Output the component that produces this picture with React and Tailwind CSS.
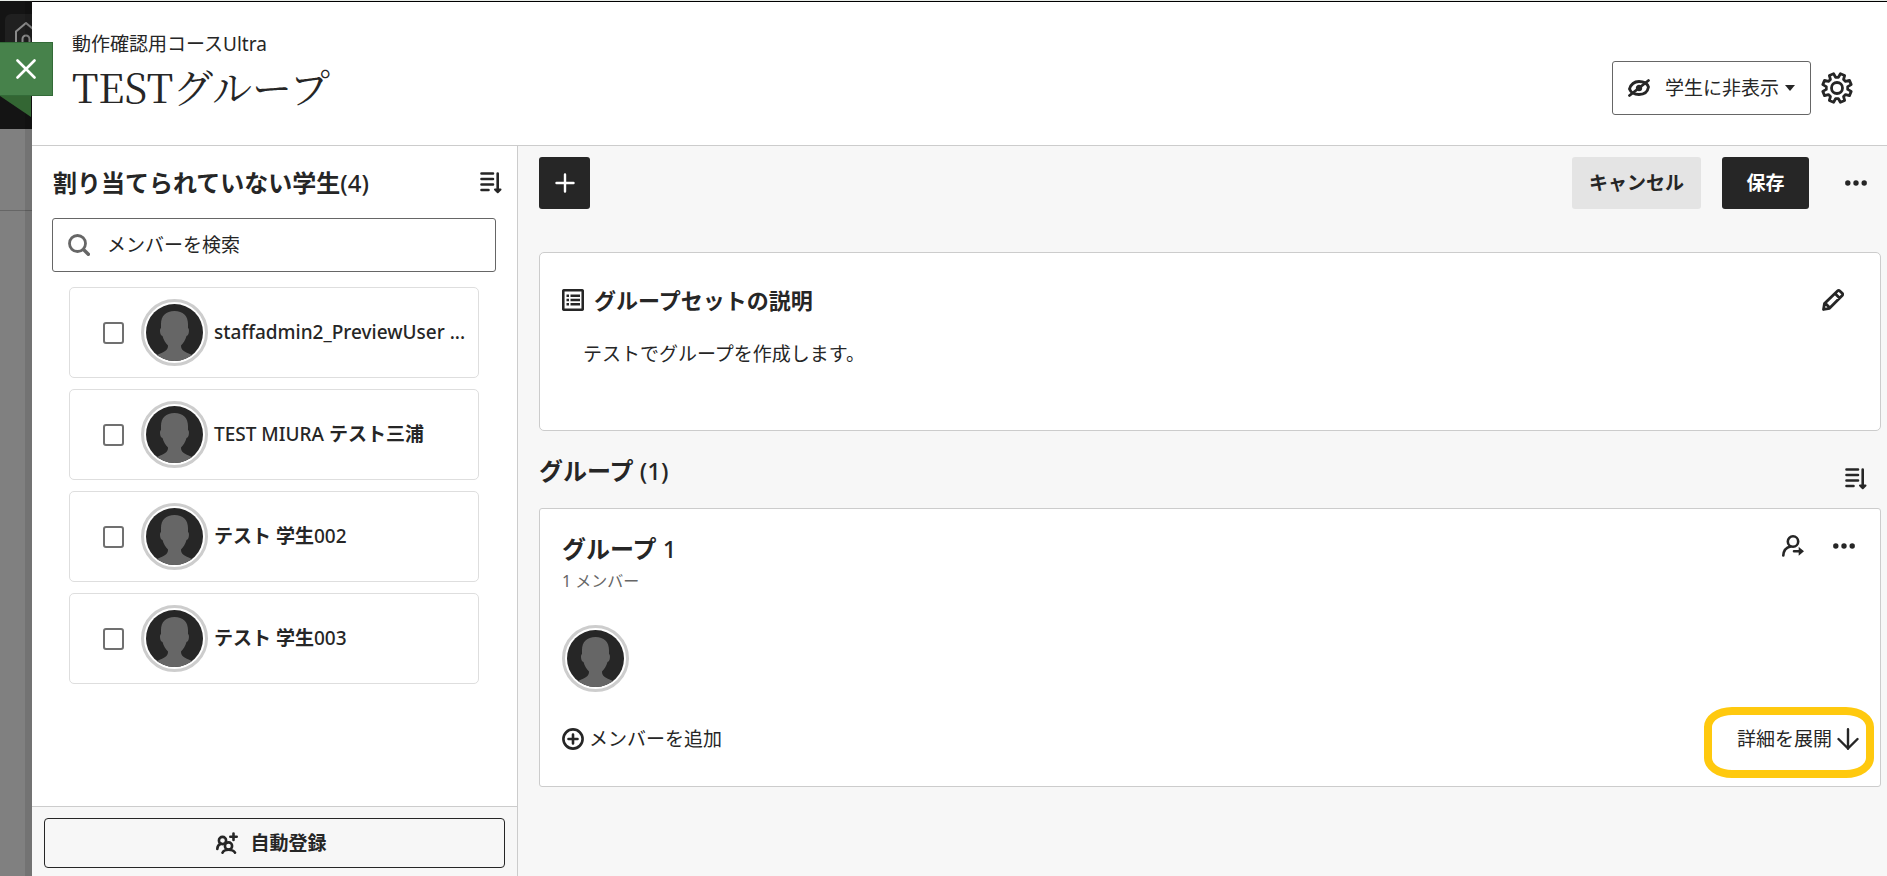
import React, { useState } from 'react';

const STUDENTS = [
  { id: 1, latin: 'staffadmin2_PreviewUser ...', kana: '', suffix: '' },
  { id: 2, latin: 'TEST MIURA ', kana: 'テスト三浦', suffix: '' },
  { id: 3, latin: '', kana: 'テスト 学生', suffix: '002' },
  { id: 4, latin: '', kana: 'テスト 学生', suffix: '003' },
];

// gear outline: 8 rounded teeth, valley pointing straight up
const point = (r, deg) => {
  const a = (deg * Math.PI) / 180;
  return `${(16 + r * Math.sin(a)).toFixed(2)} ${(16 - r * Math.cos(a)).toFixed(2)}`;
};

const GEAR_PATH = `M${[0, 45, 90, 135, 180, 225, 270, 315]
  .map((d) => d + 22.5)
  .map((d) => [point(10.8, d - 15), point(14.6, d - 9), point(14.6, d + 9), point(10.8, d + 15)].join('L'))
  .join('L')}z`;

function Avatar() {
  return (
    <span className="block h-[67px] w-[67px] shrink-0 rounded-full border-3 border-[#cdcdcd] bg-white p-[2px]">
      <svg viewBox="0 0 57 57" className="h-full w-full rounded-full">
        <rect width="57" height="57" fill="#262626" />
        <path
          fill="#666"
          d="M28.500 7C37 7 42 12 42 20v4c1.500.5 1.500 7-1.500 8-1 4-3 7-5.500 9.500 0 5 3 6 11 9.500v6H11v-6c8-3.500 11-4.500 11-9.500C19.500 39 17.500 36 16.500 32c-3-1-3-7.500-1.500-8v-4C15 12 20 7 28.500 7z"
        />
      </svg>
    </span>
  );
}

function SortIcon() {
  return (
    <svg viewBox="0 0 22 22" className="h-[22px] w-[22px]" fill="none" stroke="currentColor" strokeWidth="2.600" strokeLinecap="round">
      <path d="M1.500 1.500H13M1.500 7H13M1.500 12.500H13M1.500 18h7M17.700 1.500v16" />
      <path d="M15 17.500h5.500l-2.750 2.800z" strokeWidth="2" strokeLinejoin="round" fill="currentColor" />
    </svg>
  );
}

function DotsIcon() {
  return (
    <svg viewBox="0 0 22 22" className="h-[22px] w-[22px]" fill="currentColor">
      <circle cx="2.800" cy="11" r="2.700" />
      <circle cx="11" cy="11" r="2.700" />
      <circle cx="19.200" cy="11" r="2.700" />
    </svg>
  );
}

function HiddenIcon() {
  return (
    <svg viewBox="0 0 22 18" className="h-[18px] w-[22px]" fill="none" stroke="currentColor" strokeWidth="2.800" strokeLinecap="round">
      <path d="M1.500 10C3 5 7 2.500 11 2.500c4.500 0 8 1.500 9.500 5.500-1 5.500-5 7.500-9.500 7.500S3 14 1.500 10z" />
      <path d="M1.500 16.500l19-15" />
      <circle cx="11" cy="9" r="1.800" fill="currentColor" />
    </svg>
  );
}

function GearIcon() {
  return (
    <svg viewBox="0 0 32 32" className="h-8 w-8" fill="none" stroke="currentColor" strokeWidth="2.800" strokeLinejoin="round">
      <path d={GEAR_PATH} />
      <circle cx="16" cy="16" r="5.500" />
    </svg>
  );
}

function App() {
  const [checked, setChecked] = useState([]);

  const toggle = (id) => {
    setChecked((prev) => (prev.includes(id) ? prev.filter((x) => x !== id) : [...prev, id]));
  };

  return (
    <div className="flex h-screen w-full overflow-hidden border-t border-[#e8ece8] bg-[#808080] font-['Noto_Sans','Noto_Sans_CJK_JP',sans-serif] text-[19px] leading-7 text-[#262626]">
      {/* dimmed page behind the panel */}
      <div className="relative w-8 shrink-0">
        <div className="h-32 overflow-hidden bg-[#141414] pl-[5px] pt-[13px] text-[#8a8a8a]">
          <div className="h-12 w-12 rounded-md bg-[#202020] pl-[10px] pt-2">
            <svg viewBox="0 0 22 24" className="h-6 w-[22px]" fill="none" stroke="currentColor" strokeWidth="2">
              <path d="M1 23V9.500L11 1l10 8.500V23M7.500 23v-6a3.500 3.500 0 0 1 7 0v6" />
            </svg>
          </div>
        </div>
        <div className="h-[82px] border-b border-[#666]" />
        <div className="absolute inset-y-0 right-0 w-[7px] bg-black/10" />
        <svg viewBox="0 0 31 21" className="absolute left-0 top-[95px] h-[21px] w-[31px]">
          <path d="M0 0h31v21z" fill="#336633" />
        </svg>
        <button
          aria-label="閉じる"
          className="absolute left-0 top-[41px] z-10 flex h-[54px] w-[53px] items-center justify-center border border-l-0 border-[#336b38] bg-[#47824b] text-white"
        >
          <svg viewBox="0 0 20 20" className="h-5 w-5" fill="none" stroke="currentColor" strokeWidth="2.600" strokeLinecap="round">
            <path d="M1.500 1.500l17 17M18.500 1.500l-17 17" />
          </svg>
        </button>
      </div>

      <div className="flex min-w-0 flex-1 flex-col border-t border-black bg-white">
        {/* header */}
        <header className="flex h-36 shrink-0 items-center justify-between border-b border-[#ccc] pl-10 pr-[34px] pt-7">
          <div className="pb-9">
            <p>動作確認用コースUltra</p>
            <h1 className="mt-1 font-['Noto_Serif_CJK_JP','Liberation_Serif','Noto_Sans_CJK_JP',serif] text-[40px] font-normal leading-[48px]">
              TESTグループ
            </h1>
          </div>
          <div className="flex items-center gap-[10px]">
            <label className="relative flex items-center">
              <span className="pointer-events-none absolute left-4">
                <HiddenIcon />
              </span>
              <select
                aria-label="公開設定"
                className="h-[54px] w-[199px] appearance-none rounded-[3px] border border-[#666] bg-white pl-[52px]"
              >
                <option>学生に非表示</option>
                <option>学生に表示</option>
              </select>
              <svg viewBox="0 0 10 6" className="pointer-events-none absolute right-4 h-[6px] w-[10px]">
                <path d="M0 0h10L5 6z" fill="#262626" />
              </svg>
            </label>
            <button aria-label="設定">
              <GearIcon />
            </button>
          </div>
        </header>

        <div className="flex min-h-0 flex-1">
          {/* unassigned students */}
          <aside className="flex w-[486px] shrink-0 flex-col border-r border-[#ccc]">
            <div className="flex-1 pt-[21px]">
              <div className="flex items-center justify-between pl-[21px] pr-[15px]">
                <h2 className="text-2xl font-bold">
                  割り当てられていない学生<span className="font-medium">(4)</span>
                </h2>
                <button aria-label="並べ替え">
                  <SortIcon />
                </button>
              </div>
              <label className="relative ml-5 mr-[21px] mt-[19px] flex items-center">
                <svg viewBox="0 0 22 22" className="absolute left-4 h-[22px] w-[22px]" fill="none" stroke="#666" strokeWidth="2.800">
                  <circle cx="9.500" cy="9.500" r="8" />
                  <path d="M15 15l6.500 6.500" strokeWidth="3.400" />
                </svg>
                <input
                  type="text"
                  aria-label="メンバーを検索"
                  placeholder="メンバーを検索"
                  className="h-[54px] w-full rounded-[3px] border border-[#666] pl-[54px] placeholder:text-[#262626]"
                />
              </label>
              <ul className="ml-[37px] mr-[38px] mt-[15px] flex flex-col gap-[11px]">
                {STUDENTS.map((s) => (
                  <li key={s.id}>
                    <label className="flex h-[91px] items-center rounded-[5px] border border-[#dedede] pl-[33px] pr-3">
                      <input
                        type="checkbox"
                        checked={checked.includes(s.id)}
                        onChange={() => toggle(s.id)}
                        className="h-[22px] w-[21px] shrink-0 appearance-none rounded-[3px] border-2 border-[#707070] bg-white checked:bg-[#262626]"
                      />
                      <span className="ml-[17px] mr-[6px]">
                        <Avatar />
                      </span>
                      <span className="whitespace-pre pb-[2px] font-medium">
                        {s.latin}
                        <span className="font-bold">{s.kana}</span>
                        {s.suffix}
                      </span>
                    </label>
                  </li>
                ))}
              </ul>
            </div>
            <div className="border-t border-[#ccc] bg-[#f7f7f7] px-3 pb-2 pt-[11px]">
              <button className="flex h-[50px] w-full items-center justify-center gap-3 rounded border border-[#262626] pr-[6px] font-bold">
                <svg viewBox="0 0 22 22" className="h-[22px] w-[22px]" fill="none" stroke="currentColor" strokeWidth="2.600" strokeLinecap="round">
                  <circle cx="6.500" cy="8.500" r="3.600" />
                  <circle cx="12.500" cy="14" r="3.600" />
                  <path d="M1.300 17c0-3 1.500-4.500 3.500-5.300M6.500 20.700c.8-1.700 3-2.900 6-2.900s5.500 1.200 6.500 2.900M17.500 1.500v6.500M14.300 4.700h6.400" />
                </svg>
                自動登録
              </button>
            </div>
          </aside>

          {/* groups */}
          <main className="min-w-0 flex-1 bg-[#f7f7f7] pl-[21px] pr-[6px] pt-[11px]">
            <div className="flex items-center pr-[14px]">
              <button aria-label="追加" className="flex h-[52px] w-[51px] items-center justify-center rounded-[3px] bg-[#262626] text-white">
                <svg viewBox="0 0 20 20" className="h-5 w-5" fill="none" stroke="currentColor" strokeWidth="2.400" strokeLinecap="round">
                  <path d="M10 1.500v17M1.500 10h17" />
                </svg>
              </button>
              <button className="ml-auto h-[52px] w-[129px] rounded-[3px] bg-[#e4e4e4] font-bold">キャンセル</button>
              <button className="ml-[21px] h-[52px] w-[87px] rounded-[3px] bg-[#262626] font-bold text-white">保存</button>
              <button aria-label="その他" className="ml-9">
                <DotsIcon />
              </button>
            </div>

            <section className="mt-[43px] h-[179px] rounded-[5px] border border-[#ccc] bg-white px-[22px] pt-[33px]">
              <div className="flex items-center pr-[14px]">
                <svg viewBox="0 0 22 22" className="h-[22px] w-[22px]" fill="none" stroke="currentColor" strokeWidth="2.400">
                  <rect x="1.250" y="1.250" width="19.500" height="19.500" rx="1" strokeWidth="2.600" />
                  <path d="M8.500 6.800H18M8.500 11H18M8.500 15.200H18M4.500 6.800H7M4.500 11H7M4.500 15.200H7" />
                </svg>
                <h3 className="ml-[10px] text-[22px] font-bold">グループセットの説明</h3>
                <button aria-label="編集" className="ml-auto">
                  <svg viewBox="0 0 22 22" className="h-[22px] w-[22px]" fill="none" stroke="currentColor" strokeWidth="2.800" strokeLinejoin="round">
                    <path d="M1.500 20.500l1-6L15.500 2c.8-.8 1.500-.8 2.300 0l2.400 2.300c.7.700.7 1.400 0 2.200L7.500 19.300zM13 4.500l5 5M3 14l5 5" />
                  </svg>
                </button>
              </div>
              <p className="mt-[26px] pl-[21px]">テストでグループを作成します。</p>
            </section>

            <div className="mt-[21px] flex items-center justify-between pr-[14px]">
              <h2 className="text-2xl font-bold leading-8">
                グループ <span className="font-medium">(1)</span>
              </h2>
              <button aria-label="並べ替え" className="pt-4">
                <SortIcon />
              </button>
            </div>

            <section className="mt-[18px] rounded-[3px] border border-[#ccc] bg-white pb-[33px] pl-[22px] pr-[21px] pt-6">
              <div className="flex items-start pr-1">
                <div>
                  <h3 className="text-2xl font-bold leading-8">
                    グループ <span className="font-medium">1</span>
                  </h3>
                  <p className="mt-1 text-base text-[#666]">1 メンバー</p>
                </div>
                <button aria-label="メンバーを移動" className="ml-auto mr-[29px] mt-[2px]">
                  <svg viewBox="0 0 22 22" className="h-[22px] w-[22px]" fill="none" stroke="currentColor" strokeWidth="2.600" strokeLinecap="round">
                    <circle cx="11" cy="6.500" r="5.200" />
                    <path d="M1.300 20.500c.3-5 2.700-8 7.200-9M12 16.300h7" />
                    <path d="M17.500 13.500l3.300 2.800-3.300 2.800z" strokeWidth="1.600" fill="currentColor" />
                  </svg>
                </button>
                <button aria-label="その他" className="mt-[2px]">
                  <DotsIcon />
                </button>
              </div>
              <div className="mt-8">
                <Avatar />
              </div>
              <div className="mt-[33px] flex items-center justify-between">
                <button className="flex items-center gap-[5px]">
                  <svg viewBox="0 0 22 22" className="h-[22px] w-[22px]" fill="none" stroke="currentColor" strokeWidth="2.600" strokeLinecap="round">
                    <circle cx="11" cy="11" r="9.600" />
                    <path d="M11 6.500v9M6.500 11h9" />
                  </svg>
                  メンバーを追加
                </button>
                <button className="relative flex items-center gap-[5px]">
                  詳細を展開
                  <svg viewBox="0 0 22 22" className="h-[22px] w-[22px]" fill="none" stroke="currentColor" strokeWidth="2.400" strokeLinecap="round" strokeLinejoin="round">
                    <path d="M11 1.200v19.500M1.500 11l9.500 9.500 9.500-9.500" />
                  </svg>
                  {/* highlight */}
                  <span className="absolute -bottom-[25px] -left-[33px] -right-[15px] -top-[18px] rounded-[28px/20px] border-8 border-[#ffc90e]" />
                </button>
              </div>
            </section>
          </main>
        </div>
      </div>
    </div>
  );
}

export default App;
